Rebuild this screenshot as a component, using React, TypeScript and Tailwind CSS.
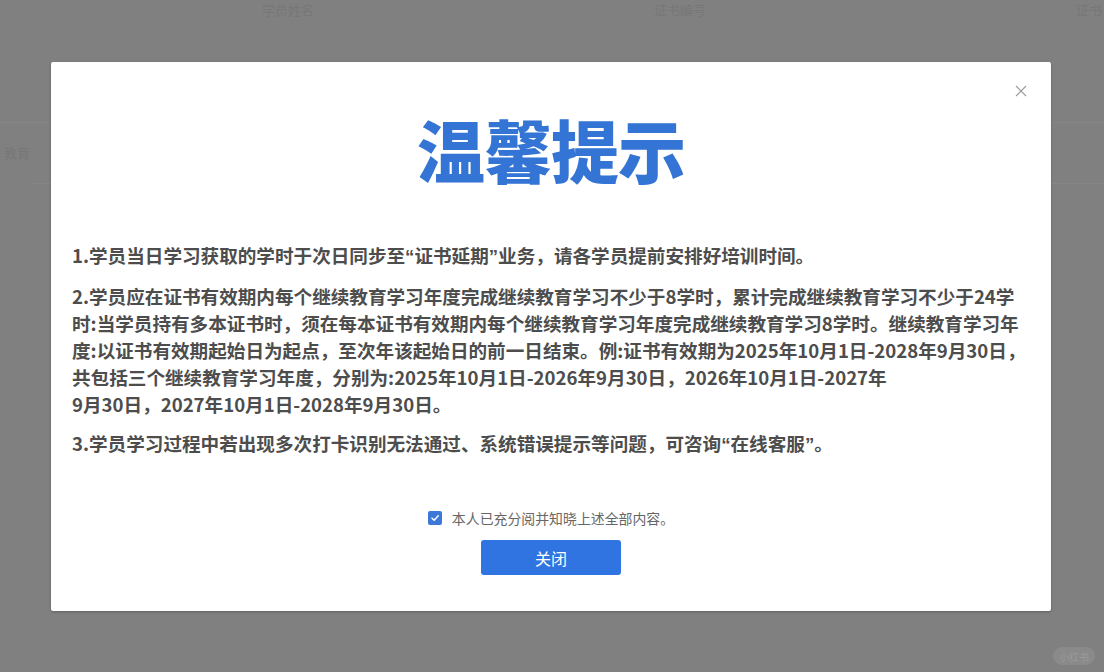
import React from "react";

const cjk = "font-['Noto_Sans_CJK_SC','Noto_Sans',sans-serif]";

// Curly quotes set in a Latin face so they stay narrow like the rest of the copy
function Q({ children }: { children: React.ReactNode }) {
  return <span className="font-['Liberation_Sans',sans-serif]">{children}</span>;
}

function Paragraph({ lines }: { lines: React.ReactNode[] }) {
  return (
    <div className="flex flex-col">
      {lines.map((l, i) => (
        <div key={i} className="whitespace-nowrap">
          {l}
        </div>
      ))}
    </div>
  );
}

export default function App() {
  return (
    <div className={`relative h-[672px] w-full overflow-hidden bg-[#808080] ${cjk}`}>
      {/* page behind the dimmed overlay */}
      <div className="flex flex-col">
        <div className="flex h-[24px] items-start text-[13px] text-[#777]">
          <span className="ml-[262px]">学员姓名</span>
          <span className="ml-[340px]">证书编号</span>
          <span className="ml-auto mr-[2px]">证书</span>
        </div>
        <div className="mt-[98px] h-px w-full bg-[#868686]" />
        <div className="flex h-[60px] items-center text-[13px] text-[#777]">
          <span className="ml-[4px]">教育</span>
        </div>
        <div className="ml-[32px] h-px bg-[#868686]" />
      </div>

      {/* dialog */}
      <div className="absolute left-[51px] top-[62px] flex h-[549px] w-[1000px] flex-col items-center rounded-[2px] bg-white pt-[53px] shadow-[0_1px_3px_rgba(0,0,0,0.25)]">
        <button className="absolute right-[23px] top-[22px] flex h-[14px] w-[14px] items-center justify-center">
          <svg width="12" height="12" viewBox="0 0 12 12">
            <path d="M1 1 L11 11 M11 1 L1 11" stroke="#9a9a9a" strokeWidth="1.1" fill="none" />
          </svg>
        </button>

        <div className="h-[68px] text-[68px] font-black leading-[68px] tracking-[-1px] text-[#3474d4]">
          温馨提示
        </div>

        <div className="mt-[58px] flex w-full flex-col gap-[12px] pl-[21px] text-[18.6px] font-bold leading-[27px] text-[#4d4d4d]">
          <Paragraph
            lines={[
              <>
                1.学员当日学习获取的学时于次日同步至<Q>“</Q>证书延期<Q>”</Q>业务，请各学员提前安排好培训时间。
              </>,
            ]}
          />
          <Paragraph
            lines={[
              "2.学员应在证书有效期内每个继续教育学习年度完成继续教育学习不少于8学时，累计完成继续教育学习不少于24学",
              "时:当学员持有多本证书时，须在每本证书有效期内每个继续教育学习年度完成继续教育学习8学时。继续教育学习年",
              "度:以证书有效期起始日为起点，至次年该起始日的前一日结束。例:证书有效期为2025年10月1日-2028年9月30日，",
              "共包括三个继续教育学习年度，分别为:2025年10月1日-2026年9月30日，2026年10月1日-2027年",
              "9月30日，2027年10月1日-2028年9月30日。",
            ]}
          />
          <Paragraph
            lines={[
              <>
                3.学员学习过程中若出现多次打卡识别无法通过、系统错误提示等问题，可咨询<Q>“</Q>在线客服<Q>”</Q>。
              </>,
            ]}
          />
        </div>

        <label className="mt-[50px] flex h-[20px] items-center gap-[10px] text-[13.9px] text-[#666]">
          <span className="flex h-[14px] w-[14px] items-center justify-center rounded-[2px] bg-[#3b78d8]">
            <svg width="10" height="10" viewBox="0 0 10 10">
              <path d="M2 5.2 L4.2 7.3 L8.2 2.8" stroke="#fff" strokeWidth="1.5" fill="none" strokeLinecap="round" strokeLinejoin="round" />
            </svg>
          </span>
          <span>本人已充分阅并知晓上述全部内容。</span>
        </label>

        <button className="mt-[12px] flex h-[35px] w-[140px] items-center justify-center rounded-[3px] bg-[#2f74e0] text-[16px] text-white">
          关闭
        </button>
      </div>

      {/* watermark */}
      <div className="absolute bottom-[7px] right-[9px] flex h-[18px] items-center rounded-full bg-[#8a8a8a] px-[6px] text-[10px] text-[#9a9a9a]">
        小红书
      </div>
    </div>
  );
}
